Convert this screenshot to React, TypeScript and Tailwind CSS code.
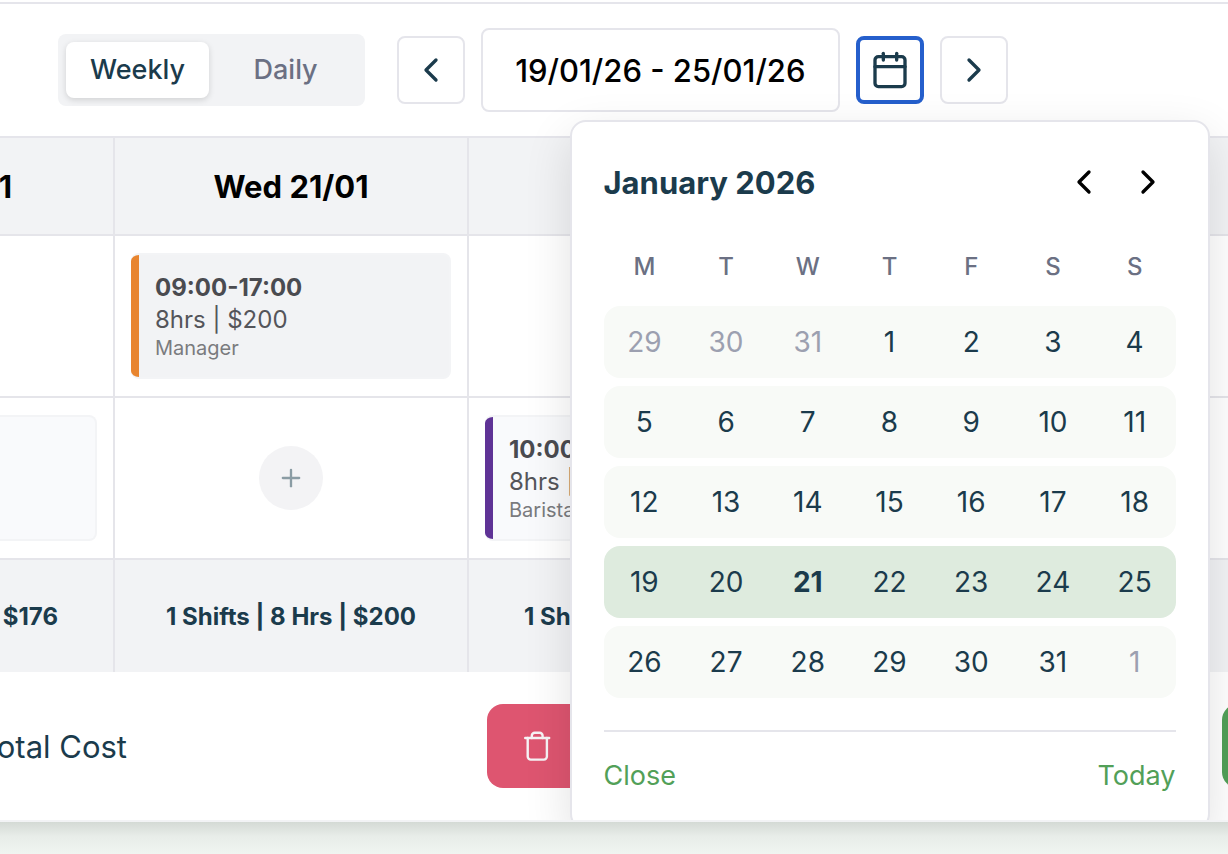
import React from "react";
import { Calendar, ChevronLeft, ChevronRight, Plus } from "lucide-react";

const weekDays = ["M", "T", "W", "T", "F", "S", "S"];

const weeks = [
  [29, 30, 31, 1, 2, 3, 4],
  [5, 6, 7, 8, 9, 10, 11],
  [12, 13, 14, 15, 16, 17, 18],
  [19, 20, 21, 22, 23, 24, 25],
  [26, 27, 28, 29, 30, 31, 1],
];

const SELECTED_WEEK = 3;
const TODAY = 21;

function isOutside(week: number, day: number) {
  return (week === 0 && day > 7) || (week === weeks.length - 1 && day < 7);
}

function TrashIcon() {
  return (
    <svg
      width="36"
      height="36"
      viewBox="0 0 36 36"
      fill="none"
      stroke="currentColor"
      strokeWidth="2.4"
      strokeLinecap="round"
      strokeLinejoin="round"
      aria-hidden="true"
    >
      <path d="M6.200 10h24" />
      <path d="M8.700 10v18.600a3 3 0 0 0 3 3h13.200a3 3 0 0 0 3-3V10" />
      <path d="M12.800 10V7.700a3 3 0 0 1 3-3h4.800a3 3 0 0 1 3 3V10" />
    </svg>
  );
}

type ShiftProps = {
  bar: string;
  tone: string;
  time?: string;
  detail?: string;
  role?: string;
};

function ShiftCard({ bar, tone, time, detail, role }: ShiftProps) {
  return (
    <div className={`flex h-[126px] overflow-hidden rounded-lg border-2 border-l-0 border-[#f3f4f6] ${tone}`}>
      <span className={`w-2 shrink-0 ${bar}`} />
      <div className="flex flex-col justify-center pl-4 whitespace-nowrap">
        <span className="text-2xl leading-8 font-bold text-[#4a4b50]">{time}</span>
        <span className="text-2xl leading-8 text-[#54555a]">{detail}</span>
        <span className="text-xl leading-6 text-[#7a7b7e]">{role}</span>
      </div>
    </div>
  );
}

function DatePicker() {
  return (
    <div
      role="dialog"
      aria-label="Choose week"
      className="absolute top-full left-1/2 z-10 mt-4 w-[640px] -translate-x-1/2 rounded-2xl border-2 border-[#e5e5eb] bg-white px-8 py-8 shadow-[0_16px_48px_rgba(0,0,0,0.12)]"
    >
      <div className="flex items-center justify-between">
        <h2 className="pt-0.5 text-[31px] leading-10 font-bold text-[#1b3b4c]">January 2026</h2>
        <div className="flex gap-2 text-black">
          <button type="button" aria-label="Previous month" className="flex size-14 items-center justify-center rounded-lg">
            <ChevronLeft size={40} />
          </button>
          <button type="button" aria-label="Next month" className="flex size-14 items-center justify-center rounded-lg">
            <ChevronRight size={40} />
          </button>
        </div>
      </div>
      <div className="mt-6 grid h-16 grid-cols-7 items-center pt-0.5 text-center text-2xl leading-8 font-medium text-[#6b7083]">
        {weekDays.map((d, i) => (
          <span key={i}>{d}</span>
        ))}
      </div>
      <div className="mt-2 flex flex-col gap-2">
        {weeks.map((week, w) => (
          <div
            key={w}
            className={`grid h-[72px] grid-cols-7 rounded-2xl ${w === SELECTED_WEEK ? "bg-[#deebde]" : "bg-[#f8faf7]"}`}
          >
            {week.map((day) => (
              <button
                key={day}
                type="button"
                className={`text-[28px] leading-10 ${isOutside(w, day) ? "text-[#9ca0b0]" : "text-[#1b3b4c]"} ${
                  w === SELECTED_WEEK && day === TODAY ? "font-bold" : ""
                }`}
              >
                {day}
              </button>
            ))}
          </div>
        ))}
      </div>
      <div className="mt-8 flex justify-between border-t-2 border-[#e5e5eb] pt-6 text-[27px] leading-10 text-[#52a058]">
        <button type="button">Close</button>
        <button type="button">Today</button>
      </div>
    </div>
  );
}

const navButton =
  "flex size-[68px] shrink-0 items-center justify-center rounded-lg border-2 border-[#e5e5eb] bg-white text-[#1b3b4c]";

function Toolbar() {
  return (
    <div className="flex h-[134px] items-center gap-4 border-b-2 border-[#e5e5eb] pl-[58px]">
      <div className="mr-4 grid shrink-0 grid-cols-2 gap-[5px] rounded-lg bg-[#f2f3f5] p-2 text-[27px] leading-10 font-medium">
        <button type="button" className="rounded-lg bg-white px-6 py-2 text-[#1b3b4c] shadow-[0_2px_6px_rgba(0,0,0,0.14)]">
          Weekly
        </button>
        <button type="button" className="rounded-lg px-6 py-2 text-[#6b7083]">
          Daily
        </button>
      </div>
      <button type="button" aria-label="Previous week" className={navButton}>
        <ChevronLeft size={40} />
      </button>
      <div className="flex h-21 shrink-0 items-center rounded-lg border-2 border-[#e5e5eb] px-8 pt-0.5 text-[31px] leading-10 font-medium text-black">
        19/01/26 - 25/01/26
      </div>
      <div className="relative shrink-0">
        <button
          type="button"
          aria-label="Open calendar"
          className="flex size-[68px] items-center justify-center rounded-lg border-4 border-[#255fcc] bg-white text-[#1b3b4c]"
        >
          <Calendar size={40} />
        </button>
        <DatePicker />
      </div>
      <button type="button" aria-label="Next week" className={navButton}>
        <ChevronRight size={40} />
      </button>
    </div>
  );
}

const cell = "border-r-2 border-b-2 border-[#e5e5ea] px-4 py-0";
const headCell = "border-r-2 border-b-2 border-[#e5e5ea] px-4 pt-0.5 pb-0 font-bold";
const totalCell = "border-r-2 border-[#e5e5ea] px-0 pt-0.5 pb-0 text-center";

function Schedule() {
  return (
    <div className="overflow-hidden">
      <table className="-ml-[239px] w-[1770px] table-fixed border-separate border-spacing-0">
        <thead>
          <tr className="h-[98px] bg-[#f2f3f5] text-[31px] leading-10 text-black">
            <th className={headCell}>Tue 20/01</th>
            <th className={headCell}>Wed 21/01</th>
            <th className={headCell} />
            <th className={headCell} />
            <th className={headCell} />
          </tr>
        </thead>
        <tbody>
          <tr className="h-[162px]">
            <td className={cell} />
            <td className={cell}>
              <ShiftCard bar="bg-[#e8852f]" tone="bg-[#f2f3f5]" time="09:00-17:00" detail="8hrs | $200" role="Manager" />
            </td>
            <td className={cell} />
            <td className={cell} />
            <td className={cell} />
          </tr>
          <tr className="h-[162px]">
            <td className={cell}>
              <ShiftCard bar="bg-[#5f3396]" tone="bg-[#f9fafc]" />
            </td>
            <td className={cell}>
              <button
                type="button"
                aria-label="Add shift"
                className="mx-auto flex size-16 items-center justify-center rounded-full bg-[#f3f3f5] text-[#8a9ca4]"
              >
                <Plus size={28} strokeWidth={2} />
              </button>
            </td>
            <td className={cell}>
              <ShiftCard bar="bg-[#5f3396]" tone="bg-[#f9fafc]" time="10:00-18:00" detail="8hrs | $176" role="Barista" />
            </td>
            <td className={cell} />
            <td className={cell} />
          </tr>
        </tbody>
        <tfoot>
          <tr className="h-28 bg-[#f2f3f5] text-2xl leading-8 font-bold text-[#1b3b4c]">
            <td className={totalCell}>1 Shifts | 8 Hrs | $176</td>
            <td className={totalCell}>1 Shifts | 8 Hrs | $200</td>
            <td className={totalCell}>1 Shifts | 8 Hrs | $176</td>
            <td className={totalCell} />
            <td className={totalCell} />
          </tr>
        </tfoot>
      </table>
    </div>
  );
}

function Footer() {
  return (
    <div className="flex items-center overflow-hidden py-8">
      <div className="flex w-[127px] shrink-0 justify-end pt-0.5 text-[31px] leading-10 whitespace-nowrap text-[#1b3b4c]">
        Total Cost
      </div>
      <button
        type="button"
        aria-label="Delete shifts"
        className="ml-[360px] flex h-21 w-72 shrink-0 items-center rounded-2xl bg-[#de5570] pl-8 text-[#f6f3f5]"
      >
        <TrashIcon />
      </button>
      <button
        type="button"
        aria-label="Publish"
        className="-mr-[282px] ml-auto h-21 w-72 shrink-0 rounded-2xl bg-[#52a058]"
      />
    </div>
  );
}

export default function App() {
  return (
    <div className="min-h-screen bg-[#f0f5f1] font-['Inter',sans-serif]">
      <main className="overflow-hidden border-b-2 border-[#f2f3f5] bg-white pt-0.5">
        <div className="border-t-2 border-[#e5e5eb]">
          <Toolbar />
          <Schedule />
          <Footer />
        </div>
      </main>
      <div className="h-8 bg-linear-to-b from-[#d4dad5] via-[#e8ede9] via-45% to-[#f0f5f1]" />
    </div>
  );
}
